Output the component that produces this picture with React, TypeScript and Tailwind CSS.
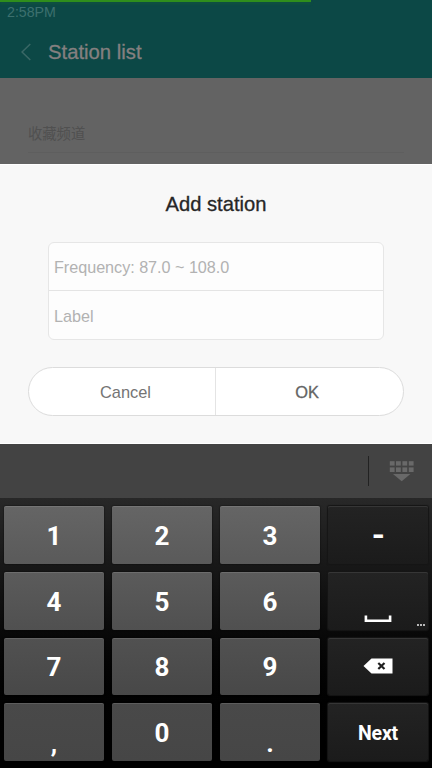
import type { ReactNode } from "react"
import clsx from "clsx"

type KeyDef = {
  id: string
  content: ReactNode
  dark?: boolean
  className?: string
}

function SpaceIcon() {
  return (
    <svg width="28" height="8" viewBox="0 0 28 8" fill="none" className="mt-[36px]">
      <path d="M1.9 0.5V5.7H26.1V0.5" stroke="#fff" strokeWidth="2.6" />
    </svg>
  )
}

function BackspaceIcon() {
  return (
    <svg width="30" height="16" viewBox="0 0 30 16">
      <path d="M0.5 8L8.5 0.5H29.5V15.5H8.5Z" fill="#fff" />
      <path d="M15.3 5L21.5 11M21.5 5L15.3 11" stroke="#1f1f1f" strokeWidth="2.2" />
    </svg>
  )
}

function HideKeyboardIcon() {
  return (
    <svg width="26" height="21" viewBox="0 0 26 21" fill="#696969">
      {[0.8, 7, 13.4, 19.8].map((x) => (
        <g key={x}>
          <rect x={x} y="0.2" width="4.8" height="4.4" />
          <rect x={x} y="6.4" width="4.8" height="4.6" />
        </g>
      ))}
      <path d="M4 13H21.4L12.7 20.2Z" />
    </svg>
  )
}

const digit = "text-[26px] pt-[2px]"
const punctuation = "text-[26px] pt-[22px]"

const keys: KeyDef[] = [
  { id: "1", content: "1", className: digit },
  { id: "2", content: "2", className: digit },
  { id: "3", content: "3", className: digit },
  { id: "minus", content: <span className="scale-x-105">-</span>, dark: true, className: "text-[32px] pl-px pt-px" },
  { id: "4", content: "4", className: digit },
  { id: "5", content: "5", className: digit },
  { id: "6", content: "6", className: digit },
  { id: "space", content: <SpaceIcon />, dark: true },
  { id: "7", content: "7", className: digit },
  { id: "8", content: "8", className: digit },
  { id: "9", content: "9", className: digit },
  { id: "backspace", content: <BackspaceIcon />, dark: true },
  { id: "comma", content: ",", className: punctuation },
  { id: "0", content: "0", className: digit },
  { id: "period", content: ".", className: punctuation },
  { id: "next", content: "Next", dark: true, className: "text-[19.5px] tracking-[-0.25px] pt-[3px]" },
]

const rowColors = [
  "from-[#656565] to-[#5a5a5a]",
  "from-[#5b5b5b] to-[#505050]",
  "from-[#515151] to-[#484848]",
  "from-[#494949] to-[#464646]",
]

function Key({ item, row }: { item: KeyDef; row: number }) {
  return (
    <button
      className={clsx(
        "relative flex items-center justify-center rounded-[2px] bg-linear-to-b font-bold leading-none text-white",
        item.dark
          ? "from-[#232323] to-[#1b1b1b] shadow-[inset_0_1px_0_#363636,0_0_1px_1px_#161616]"
          : clsx(rowColors[row], "shadow-[inset_0_1px_0_#ffffff1c,0_0_1px_1px_#00000038]"),
        item.className,
      )}
    >
      {item.content}
      {item.id === "space" && (
        <span className="absolute bottom-[4px] right-[3px] flex gap-px">
          <i className="h-[2px] w-[2px] bg-[#b8b8b8]" />
          <i className="h-[2px] w-[2px] bg-[#b8b8b8]" />
          <i className="h-[2px] w-[2px] bg-[#b8b8b8]" />
        </span>
      )}
    </button>
  )
}

export default function App() {
  return (
    <div className="flex h-[768px] w-[432px] flex-col overflow-hidden bg-[#636363] font-['Liberation_Sans',sans-serif]">
      {/* Status bar and title */}
      <header className="relative h-[78px] shrink-0 bg-[#0c4846]">
        <div className="absolute left-0 top-0 h-[2px] w-[311px] bg-[#2f8e1c] shadow-[0_2px_3px_#2f8e1c30]" />
        <div className="pl-[7px] pt-[4px] text-[14.2px] leading-4 text-[#3c706e]">2:58PM</div>
        <div className="mt-[19px] flex items-center pl-[21px]">
          <svg width="10" height="18" viewBox="0 0 10 18" fill="none">
            <path d="M9.3 1L1 9L9.3 17" stroke="#3a6866" strokeWidth="1.5" />
          </svg>
          <h1 className="pl-[17px] pt-px text-[20.3px] leading-6 text-[#858080] [-webkit-text-stroke:0.3px_#858080]">
            Station list
          </h1>
        </div>
      </header>

      <main className="h-[86px] shrink-0 px-[28px] pt-[44px]">
        <div className="h-[31px] border-b border-[#5e5e5e] font-['Noto_Sans_CJK_SC',sans-serif] text-[14.3px] leading-[21px] text-[#505050]">
          收藏频道
        </div>
      </main>

      {/* Add station dialog */}
      <section className="h-[280px] shrink-0 border-y border-white bg-[#f8f8f8] px-[28px]">
        <h2 className="pt-[27px] text-center text-[20.2px] leading-6 text-[#262626] [-webkit-text-stroke:0.3px_#262626]">
          Add station
        </h2>
        <div className="mx-[20px] mt-[26px] h-[98px] rounded-[6px] border border-[#e6e6e6] bg-[#fdfdfd] text-[16.2px] text-[#b2b2b2]">
          <div className="flex h-[48px] items-center border-b border-[#e4e4e4] pl-[5px] pt-[1px]">
            <span className="tracking-[-0.03px]">Frequency: 87.0 ~ 108.0</span>
          </div>
          <div className="flex h-[48px] items-center pl-[5px] pt-[2px]">Label</div>
        </div>
        <div className="mt-[27px] flex h-[49px] overflow-hidden rounded-full border border-[#dcdcdc] bg-white text-[16.4px] text-[#747474]">
          <button className="w-[187px] border-r border-[#e4e4e4] pl-[7px] pt-[2px]">Cancel</button>
          <button className="flex-1 pr-[5px] pt-[2px] text-[#646464] [-webkit-text-stroke:0.3px_#646464]">OK</button>
        </div>
      </section>

      {/* Candidate strip */}
      <div className="flex h-[54px] shrink-0 items-center justify-end bg-[#434343] pr-[17px]">
        <div className="h-[30px] w-px bg-[#222]" />
        <div className="ml-[20px]">
          <HideKeyboardIcon />
        </div>
      </div>

      <div className="grid h-[270px] shrink-0 grid-cols-4 grid-rows-4 gap-[8px] bg-linear-to-b from-[#282828] to-black px-[4px] pb-[7px] pt-[8px] font-[Roboto,sans-serif]">
        {keys.map((item, i) => (
          <Key key={item.id} item={item} row={Math.floor(i / 4)} />
        ))}
      </div>
    </div>
  )
}
